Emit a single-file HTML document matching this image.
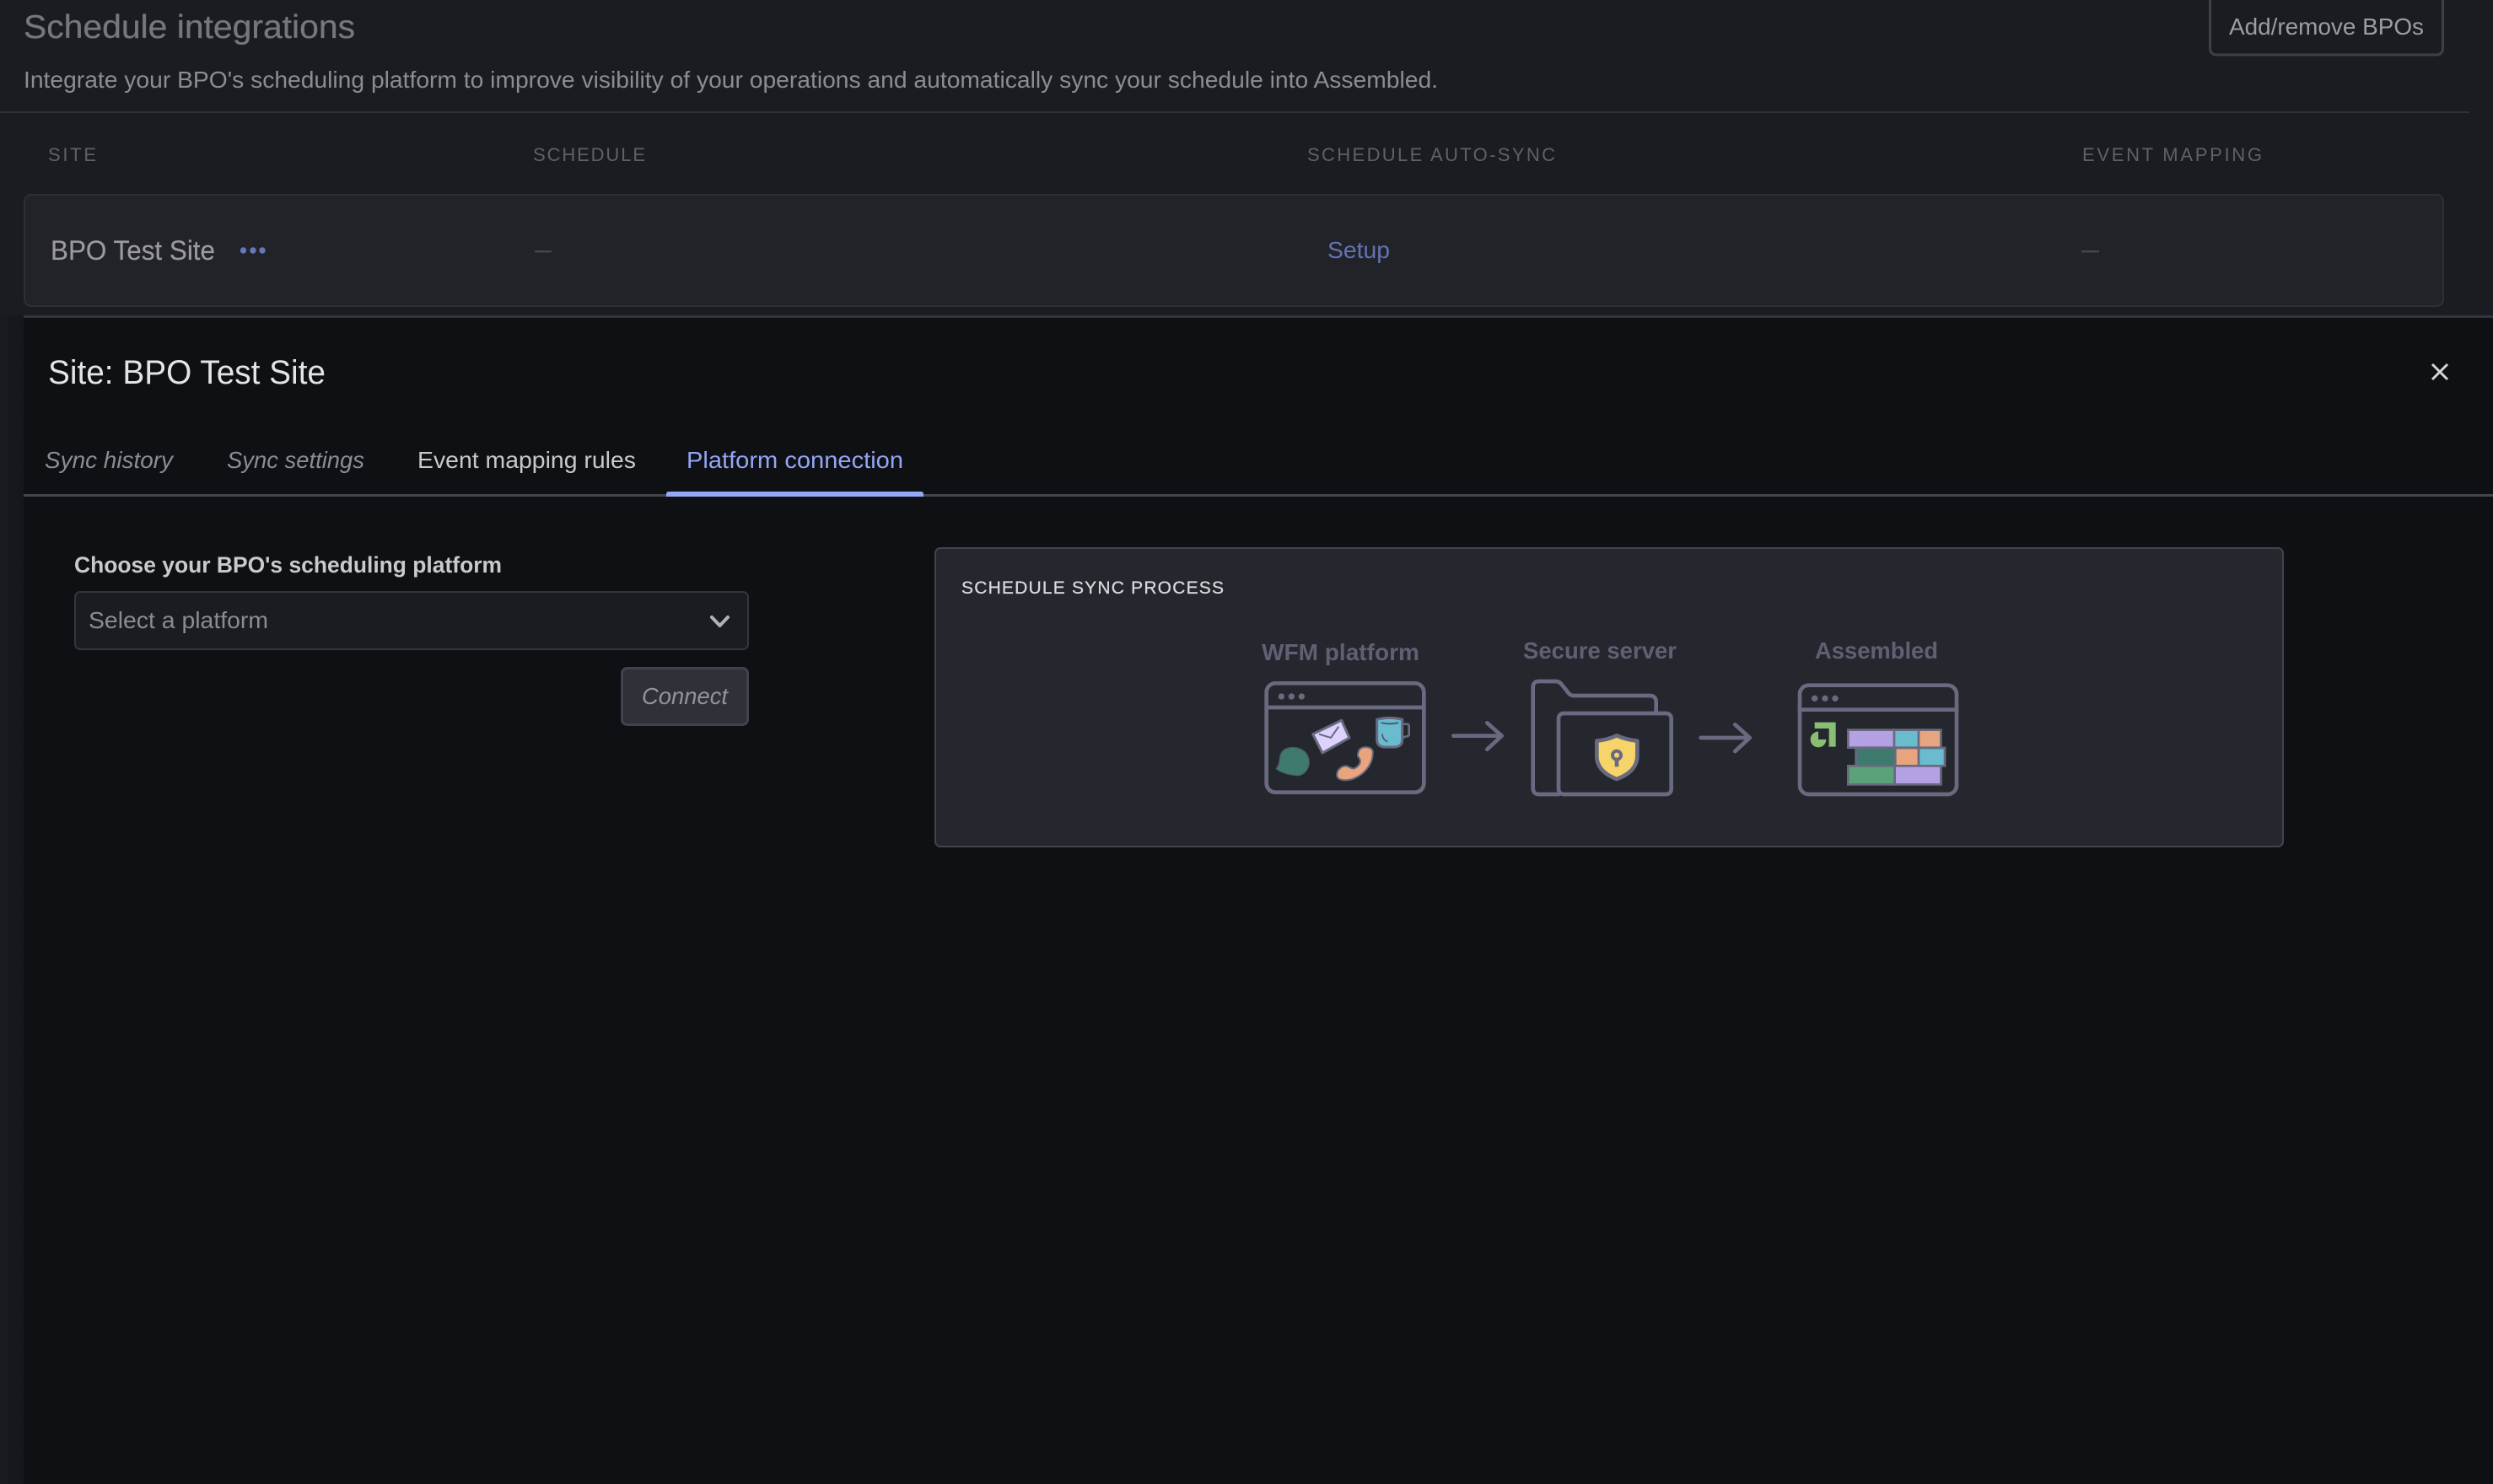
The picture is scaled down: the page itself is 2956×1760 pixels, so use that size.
<!DOCTYPE html>
<html lang="en"><head><meta charset="utf-8"><title>Schedule integrations</title>
<style>
html,body{margin:0;padding:0;background:#0f1014;width:2956px;height:1760px;overflow:hidden}
svg{display:block}
text{font-family:"Liberation Sans",sans-serif}
.hd{font-size:22px;fill:#606167}
.ill{font-size:28px;font-weight:700;fill:#5f6073}
.st{fill:none;stroke:#696a80;stroke-width:14;stroke-linecap:round;stroke-linejoin:round}
.b{stroke:#696a80;stroke-width:8}
</style></head><body>
<svg width="2956" height="1760" viewBox="0 0 2956 1760" xmlns="http://www.w3.org/2000/svg">
<defs><linearGradient id="s" x1="0" x2="1" y1="0" y2="0"><stop offset="0" stop-color="#1a1b20"/><stop offset="1" stop-color="#15161b"/></linearGradient></defs>
<rect width="2956" height="374" fill="#1b1c21"/>
<rect x="0" y="374" width="28" height="1386" fill="url(#s)"/>
<rect x="28" y="374" width="2928" height="1386" fill="#0f1014"/>
<rect x="28" y="374" width="2928" height="3" fill="#33343d"/>

<text x="28" y="45" font-size="39" fill="#76777c" stroke="#76777c" stroke-width=".3" textLength="393" lengthAdjust="spacingAndGlyphs">Schedule integrations</text>
<text x="28" y="104" font-size="28" fill="#8c8d92" textLength="1677" lengthAdjust="spacingAndGlyphs">Integrate your BPO's scheduling platform to improve visibility of your operations and automatically sync your schedule into Assembled.</text>
<rect x="2620.5" y="-10" width="276" height="75" rx="7" fill="#1b1c21" stroke="#3e3f49" stroke-width="3"/>
<text x="2643" y="41" font-size="28" fill="#9c9da1" textLength="231" lengthAdjust="spacingAndGlyphs">Add/remove BPOs</text>
<rect x="0" y="132" width="2928" height="2" fill="#2f3038"/>

<text class="hd" x="57" y="191" textLength="57" lengthAdjust="spacing">SITE</text>
<text class="hd" x="632" y="191" textLength="133" lengthAdjust="spacing">SCHEDULE</text>
<text class="hd" x="1550" y="191" textLength="294" lengthAdjust="spacing">SCHEDULE AUTO-SYNC</text>
<text class="hd" x="2469" y="191" textLength="213" lengthAdjust="spacing">EVENT MAPPING</text>

<rect x="29" y="231" width="2868" height="132" rx="8" fill="#222328" stroke="#2e2f37" stroke-width="2"/>
<text x="60" y="308" font-size="32" fill="#9a9a9f" stroke="#9a9a9f" stroke-width=".2" textLength="195" lengthAdjust="spacingAndGlyphs">BPO Test Site</text>
<circle cx="288.5" cy="297" r="3.7" fill="#6577bb"/><circle cx="300" cy="297" r="3.7" fill="#6577bb"/><circle cx="311" cy="297" r="3.7" fill="#6577bb"/>
<rect x="634" y="297" width="20" height="2.5" fill="#44454e"/>
<text x="1574" y="306" font-size="28" fill="#6272b4" textLength="74" lengthAdjust="spacingAndGlyphs">Setup</text>
<rect x="2468" y="297" width="21" height="2.5" fill="#44454e"/>

<text x="57" y="455" font-size="40" fill="#e3e4e8" textLength="329" lengthAdjust="spacingAndGlyphs">Site: BPO Test Site</text>
<path d="M2884 432L2902 450M2902 432L2884 450" stroke="#d5d6da" stroke-width="3" fill="none"/>

<text x="53" y="555" font-size="28" font-style="italic" fill="#8c8d93" textLength="152" lengthAdjust="spacingAndGlyphs">Sync history</text>
<text x="269" y="555" font-size="28" font-style="italic" fill="#8c8d93" textLength="163" lengthAdjust="spacingAndGlyphs">Sync settings</text>
<text x="495" y="555" font-size="28" fill="#c8c9cd" textLength="259" lengthAdjust="spacingAndGlyphs">Event mapping rules</text>
<text x="814" y="555" font-size="28" fill="#93a5f5" textLength="257" lengthAdjust="spacingAndGlyphs">Platform connection</text>
<rect x="28" y="586" width="2928" height="3" fill="#44454f"/>
<path d="M790 589V586Q790 583 793 583H1092Q1095 583 1095 586V589Z" fill="#93a8f8"/>

<text x="88" y="679" font-size="27" font-weight="700" fill="#c9cacd" textLength="507" lengthAdjust="spacingAndGlyphs">Choose your BPO's scheduling platform</text>
<rect x="89" y="702" width="798" height="68" rx="6" fill="#1b1c21" stroke="#33343e" stroke-width="2"/>
<text x="105" y="745" font-size="28" fill="#8b8c92" textLength="213" lengthAdjust="spacingAndGlyphs">Select a platform</text>
<path d="M844 732L853.500 742L863 732" fill="none" stroke="#b0b1b8" stroke-width="4" stroke-linecap="round" stroke-linejoin="round"/>
<rect x="737.500" y="792.500" width="149" height="67" rx="6" fill="#2f3139" stroke="#41424d" stroke-width="3"/>
<text x="761" y="835" font-size="28" font-style="italic" fill="#93949b" textLength="102" lengthAdjust="spacingAndGlyphs">Connect</text>

<rect x="1109" y="650" width="1598" height="354" rx="6" fill="#25272e" stroke="#42434f" stroke-width="2"/>
<text x="1140" y="704" font-size="21" fill="#d8d9dc" stroke="#d8d9dc" stroke-width=".3" textLength="311" lengthAdjust="spacing">SCHEDULE SYNC PROCESS</text>

<text class="ill" x="1496" y="783" textLength="187" lengthAdjust="spacingAndGlyphs">WFM platform</text>
<text class="ill" x="1806" y="781" textLength="182" lengthAdjust="spacingAndGlyphs">Secure server</text>
<text class="ill" x="2152" y="781" textLength="146" lengthAdjust="spacingAndGlyphs">Assembled</text>

<g transform="translate(1440 740) scale(.33333)">
<rect class="st" x="185" y="211" width="560" height="388" rx="32"/>
<path class="st" d="M185 297H745"/>
<circle cx="238" cy="258" r="11" fill="#696a80"/><circle cx="274" cy="258" r="11" fill="#696a80"/><circle cx="310" cy="258" r="11" fill="#696a80"/>
<path d="M220 515C238 495 226 470 243 452C268 430 318 438 332 470C346 505 325 537 295 539C270 537 240 532 220 515Z" fill="#3f7a6e" stroke="#4b5d62" stroke-width="4"/>
<path d="M350 392L452 343L480 405L384 459Z" fill="#ddd2fb" stroke="#686a80" stroke-width="9" stroke-linejoin="round"/>
<path d="M372 392L414 405L442 365" fill="none" stroke="#686a80" stroke-width="6"/>
<path d="M517 446C530 434 558 437 563 452C566 492 540 530 500 548C472 560 440 558 436 541C434 523 447 507 467 505C482 507 490 522 505 510C525 495 520 482 510 470C510 458 512 452 517 446Z" fill="#e8a47c" stroke="#686a80" stroke-width="6" stroke-linejoin="round"/>
<path d="M578 340Q622 328 668 340V412Q668 436 640 438H606Q578 436 578 412Z" fill="#68bccd" stroke="#696a80" stroke-width="9"/>
<path d="M595 352Q622 358 652 352" fill="none" stroke="#555668" stroke-width="6" stroke-linecap="round"/>
<path d="M597 392Q598 410 614 418" fill="none" stroke="#555668" stroke-width="5" stroke-linecap="round"/>
<path d="M668 356H684Q692 356 692 364V392Q692 400 684 400L668 404" fill="none" stroke="#696a80" stroke-width="8"/>
<path class="st" d="M850 398H1020M970 352L1022 398L970 446"/>
</g>

<g transform="translate(1780 740) scale(.33333)">
<path class="st" d="M205 606H135Q113 606 113 584V226Q113 204 135 204H193Q206 204 214 214L238 244Q246 255 258 255H528Q551 255 551 278V318"/>
<rect class="st" x="204" y="318" width="401" height="288" rx="18"/>
<path d="M411 397Q445 412 484 416V470Q484 525 411 552Q340 525 340 470V416Q380 412 411 397Z" fill="#f6d469" stroke="#696a80" stroke-width="14" stroke-linejoin="round"/>
<circle cx="411" cy="467" r="15" fill="#f6d469" stroke="#696a80" stroke-width="12"/>
<rect x="404" y="480" width="14" height="28" fill="#696a80"/>
<path class="st" d="M710 405H880M832 358L884 405L832 453"/>
</g>

<g transform="translate(2090 740) scale(.33333)">
<rect class="st" x="132" y="218" width="558" height="388" rx="32"/>
<path class="st" d="M132 305H690"/>
<circle cx="185" cy="265" r="11" fill="#696a80"/><circle cx="222" cy="265" r="11" fill="#696a80"/><circle cx="258" cy="265" r="11" fill="#696a80"/>
<path d="M185 350H260V437H236V372H185Z" fill="#8abf73"/>
<path d="M198 383A28 28 0 1 0 226 411H198Z" fill="#8abf73"/>
<rect class="b" x="304" y="377" width="164" height="63" fill="#b4a1e3"/>
<rect class="b" x="468" y="377" width="87" height="63" fill="#68bccd"/>
<rect class="b" x="555" y="377" width="79" height="63" fill="#e8a47c"/>
<rect class="b" x="332" y="441" width="140" height="64" fill="#3f7a6e"/>
<rect class="b" x="472" y="441" width="83" height="64" fill="#e8a47c"/>
<rect class="b" x="555" y="441" width="93" height="64" fill="#68bccd"/>
<rect class="b" x="304" y="505" width="166" height="66" fill="#5ba27b"/>
<rect class="b" x="470" y="505" width="164" height="66" fill="#b4a1e3"/>
</g>
</svg>
</body></html>
